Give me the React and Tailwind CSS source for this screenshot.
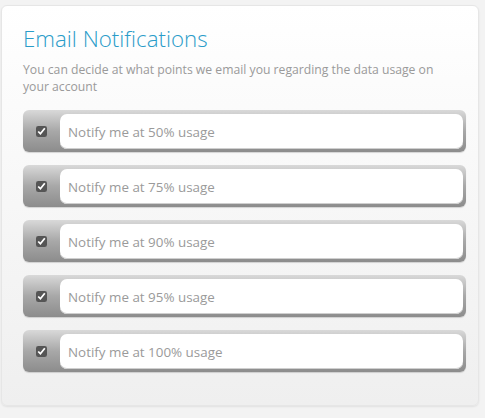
import React from "react";

const levels = [50, 75, 90, 95, 100];

const NotifyRow = ({ level }) => (
  <div className="flex h-[42px] items-center rounded-[6px] bg-gradient-to-b from-[#d9d9d9] via-[#a8a8a8] to-[#8c8c8c] pr-[3px] shadow-[0_1px_1px_rgba(0,0,0,0.15)]">
    <div className="flex w-[37px] items-center justify-center">
      <input type="checkbox" defaultChecked className="h-[11px] w-[11px] accent-[#555]" />
    </div>
    <div className="flex h-[35px] flex-1 items-center rounded-[7px] bg-white pl-[8px] pt-[3px] text-[13.4px] text-[#9a9a9a] shadow-[inset_0_-1px_0_#cfcfcf]">
      Notify me at {level}% usage
    </div>
  </div>
);

const App = () => {
  return (
    <div className="h-[418px] w-[485px] bg-[#f3f3f3] pt-[5px] pl-[1px] font-['Open_Sans',sans-serif]">
      <div className="h-[401px] w-[478px] rounded-[6px] border border-[#e6e6e6] bg-gradient-to-b from-white to-[#efefef] px-[21px] pt-[17px] shadow-[0_1px_2px_rgba(0,0,0,0.08)]">
        <h1 className="text-[22.3px] font-light leading-[32px] text-[#2a9cc9]">Email Notifications</h1>
        <p className="mt-[6px] w-[415px] text-[12.2px] leading-[17px] text-[#9a9a9a]">
          You can decide at what points we email you regarding the data usage on your account
        </p>
        <div className="mt-[15px] flex w-[443px] flex-col gap-[13px]">
          {levels.map((l) => (
            <NotifyRow key={l} level={l} />
          ))}
        </div>
      </div>
    </div>
  );
};

export default App;
